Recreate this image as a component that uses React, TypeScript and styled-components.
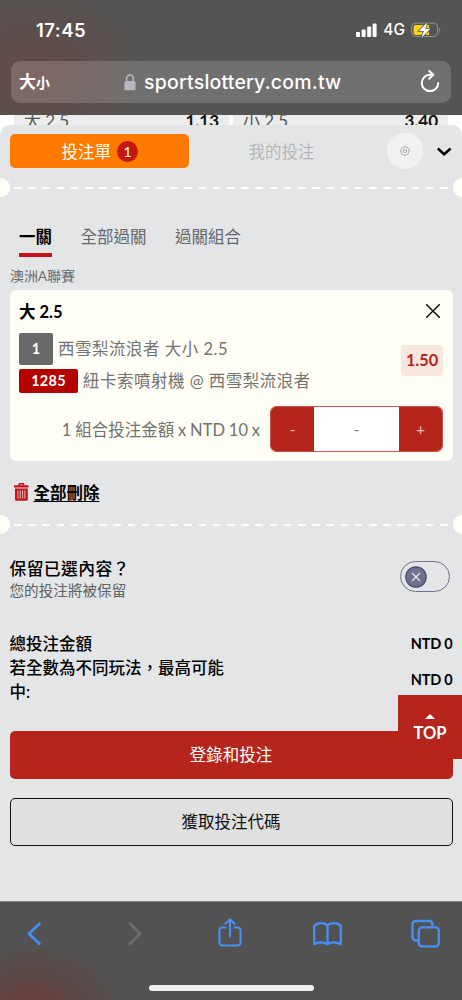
import React from 'react';
import styled, { createGlobalStyle } from 'styled-components';

const RED = '#b6251b';
const CREAM = '#fffef6';

const GlobalStyle = createGlobalStyle`
  * { box-sizing: border-box; }
  body { margin: 0; background: #fff; }
  button { font: inherit; border: 0; padding: 0; background: none; color: inherit; }
  svg { display: block; flex: none; }
`;

const Screen = styled.div`
  width: 462px;
  height: 1000px;
  overflow: hidden;
  position: relative;
  display: flex;
  flex-direction: column;
  color: #000;
  font-family: Lato, 'Noto Sans CJK TC', sans-serif;
  font-size: 16.5px;
  white-space: nowrap;
`;

/* Browser chrome */
const BrowserTop = styled.header`
  height: 115px;
  flex: none;
  padding: 16px 11px 0;
  color: #fff;
  font-family: Inter, 'Noto Sans CJK TC', sans-serif;
  background: radial-gradient(ellipse 110px 90px at 35px 75px, #684844 0%, rgba(98, 74, 71, 0.6) 45%, rgba(83, 83, 82, 0) 100%), #545453;
`;
const StatusBar = styled.div`
  height: 27px;
  display: flex;
  align-items: center;
  justify-content: space-between;
  padding: 0 10px 0 25px;
`;
const Clock = styled.span`
  font-size: 18.5px;
  font-weight: 600;
  letter-spacing: 0.5px;
`;
const StatusIcons = styled.div`
  display: flex;
  align-items: center;
  gap: 6px;
  font-size: 15.5px;
  font-weight: 500;
`;
const AddressBar = styled.div`
  height: 42px;
  margin-top: 18px;
  border-radius: 9px;
  background: rgba(255, 255, 255, 0.17);
  display: grid;
  grid-template-columns: 113px 1fr 31px;
  align-items: center;
`;
const TextSize = styled.div`
  padding-left: 8px;
  font-size: 17px;
  font-weight: 700;
  line-height: 24px;
  small { font-size: 14px; }
`;
const Host = styled.div`
  display: flex;
  align-items: center;
  gap: 8px;
  font-size: 19.5px;
  font-weight: 500;
  line-height: 24px;
  letter-spacing: 0.2px;
`;

/* Odds strip behind the slip */
const OddsStrip = styled.div`
  height: 24px;
  flex: none;
  padding: 0 14px;
  display: flex;
  gap: 4px;
  background: #fff;
`;
const OddsCell = styled.div`
  flex: 1;
  height: 24px;
  padding: 0 10px;
  background: #ececec;
  display: flex;
  justify-content: space-between;
  font-size: 17px;
  line-height: 12px;
  color: #555;
  b { color: #111; }
`;

/* Bet slip */
const Slip = styled.main`
  flex: 1;
  margin-top: -14px;
  border-radius: 10px 10px 0 0;
  background: #e4e5e7;
  padding-top: 8px;
`;
const SlipTabs = styled.div`
  height: 36px;
  padding: 0 10px 0 9.5px;
  display: grid;
  grid-template-columns: 179.5px 185px 13px 36px 1fr;
  align-items: center;
`;
const ActiveTab = styled.button`
  height: 34px;
  border-radius: 5px;
  background: #ff7b00;
  color: ${CREAM};
  display: flex;
  align-items: center;
  justify-content: center;
  gap: 6px;
  padding-left: 1px;
`;
const Count = styled.span`
  width: 21px;
  height: 21px;
  border-radius: 50%;
  background: #c4190f;
  font-size: 14px;
  line-height: 21px;
`;
const MutedTab = styled.button`
  color: #b5b6b8;
`;
const RoundButton = styled.button`
  grid-column: 4;
  width: 36px;
  height: 36px;
  border-radius: 50%;
  background: #f1f1f1;
  display: grid;
  place-items: center;
`;
const Collapse = styled.button`
  justify-self: end;
`;

const Perforation = styled.div<{ $top: number }>`
  height: 19px;
  margin-top: ${(p) => p.$top}px;
  display: flex;
  align-items: center;
  justify-content: space-between;
`;
const Notch = styled.i<{ $right?: boolean }>`
  width: 9.5px;
  height: 19px;
  background: ${CREAM};
  border-radius: ${(p) => (p.$right ? '10px 0 0 10px' : '0 10px 10px 0')};
`;
const Dashes = styled.i`
  width: 434px;
  height: 2px;
  margin-top: 1px;
  background: repeating-linear-gradient(90deg, ${CREAM} 0 7.6px, transparent 7.6px 14.2px);
`;

const ModeTabs = styled.nav`
  margin-top: 20px;
  padding-left: 19px;
  display: flex;
  gap: 28.5px;
`;
const ModeTab = styled.button<{ $active?: boolean }>`
  height: 40px;
  line-height: 38px;
  padding-top: 1px;
  display: flex;
  align-items: flex-start;
  color: ${(p) => (p.$active ? '#000' : '#66676a')};
  font-weight: ${(p) => (p.$active ? 700 : 400)};
  box-shadow: ${(p) => (p.$active ? 'inset 0 -4px #c4111a' : 'none')};
`;
const League = styled.div`
  height: 33px;
  padding-left: 10px;
  font-size: 12.6px;
  letter-spacing: -0.1px;
  line-height: 38px;
  font-size: 14px;
  color: #6b6c6e;
`;
const Card = styled.section`
  height: 171px;
  margin: 0 9.5px;
  padding: 10px 9.5px 9px;
  border-radius: 6px;
  background: ${CREAM};
  display: flex;
  flex-direction: column;
`;
const CardHead = styled.div`
  height: 22px;
  padding-right: 3px;
  display: flex;
  align-items: center;
  justify-content: space-between;
  font-size: 16.5px;
  font-weight: 700;
`;
const Selection = styled.div`
  display: flex;
  align-items: center;
  justify-content: space-between;
  height: 61px;
  margin-top: 10px;
`;
const Lines = styled.div`
  display: grid;
  gap: 4px;
`;
const Line = styled.div<{ $h: number }>`
  height: ${(p) => p.$h}px;
  padding-bottom: 2px;
  display: flex;
  align-items: center;
  gap: 5px;
  color: #727270;
  letter-spacing: 0.5px;
`;
const Tag = styled.span<{ $w: number; $color: string }>`
  width: ${(p) => p.$w}px;
  align-self: stretch;
  margin-bottom: -2px;
  border-radius: 2px;
  background: ${(p) => p.$color};
  color: #fff;
  font-size: 14.4px;
  letter-spacing: 0.3px;
  font-weight: 700;
  display: grid;
  place-items: center;
`;
const Odds = styled.span`
  width: 42px;
  height: 31px;
  margin-top: -5px;
  padding-bottom: 1px;
  border-radius: 4px;
  background: #f8e7df;
  color: ${RED};
  font-size: 16.3px;
  font-weight: 700;
  display: grid;
  place-items: center;
`;
const StakeRow = styled.div`
  margin-top: auto;
  display: flex;
  align-items: center;
  justify-content: flex-end;
  gap: 10px;
  color: #727270;
  word-spacing: -0.4px;
`;
const Stepper = styled.div`
  width: 173px;
  height: 46px;
  border: 1px solid #c6574e;
  border-radius: 6px;
  overflow: hidden;
  background: #fff;
  display: grid;
  grid-template-columns: 43px 1fr 43px;
  text-align: center;
  line-height: 44px;
  font-size: 15px;
`;
const StepButton = styled.button`
  background: ${RED};
  color: #eec0bb;
`;
const DeleteAll = styled.button`
  height: 30px;
  margin: 16px 0 0 14px;
  display: flex;
  align-items: center;
  gap: 4.5px;
  font-weight: 700;
  text-decoration: underline;
  text-underline-offset: 2px;
  text-decoration-thickness: 1px;
`;

const KeepRow = styled.div`
  margin-top: 23px;
  padding: 0 12px 0 9.5px;
  display: flex;
  align-items: center;
  justify-content: space-between;
`;
const KeepTitle = styled.div`
  font-size: 16.8px;
  font-weight: 500;
  letter-spacing: 0.4px;
  line-height: 24px;
`;
const KeepHint = styled.div`
  font-size: 14.6px;
  line-height: 20px;
  color: #606163;
`;
const Toggle = styled.button`
  width: 50px;
  height: 31px;
  margin-top: -5px;
  padding: 0 4px;
  border: 1.5px solid #74728f;
  border-radius: 16px;
  display: flex;
  align-items: center;
`;
const Totals = styled.div`
  height: 72px;
  margin-top: 31px;
  padding: 0 9.5px;
  display: flex;
  justify-content: space-between;
  font-weight: 500;
  line-height: 24px;
`;
const Amounts = styled.div`
  display: flex;
  flex-direction: column;
  gap: 12px;
  text-align: right;
  font-size: 14.5px;
  letter-spacing: -0.2px;
  font-weight: 700;
`;
const WideButton = styled.button<{ $primary?: boolean }>`
  display: block;
  width: 443px;
  height: 48px;
  padding-bottom: 2px;
  margin: ${(p) => (p.$primary ? 27 : 18.5)}px 9.5px 0;
  border-radius: 5px;
  border: ${(p) => (p.$primary ? '0' : '1.3px solid #111')};
  background: ${(p) => (p.$primary ? RED : '#e0e0e0')};
  color: ${(p) => (p.$primary ? '#fff' : '#111')};
`;
const BackToTop = styled.button`
  position: absolute;
  right: 0;
  top: 695px;
  width: 64px;
  height: 64px;
  padding-top: 3px;
  background: ${RED};
  color: #fff;
  font-size: 16.5px;
  font-weight: 700;
  line-height: 22px;
  display: flex;
  flex-direction: column;
  align-items: center;
  justify-content: center;
  gap: 3px;
`;

const BrowserBottom = styled.footer`
  height: 99px;
  flex: none;
  border-top: 1px solid #858585;
  background: radial-gradient(ellipse 95px 65px at 30px 105px, #6b3c3a 0%, rgba(96, 65, 63, 0.6) 50%, rgba(83, 83, 83, 0) 100%), #525252;
  color: #468ff8;
  display: flex;
  flex-direction: column;
  justify-content: space-between;
  padding: 13px 0 9px 24px;
`;
const Toolbar = styled.div`
  display: grid;
  grid-template-columns: 99.5px 94.5px 95px 98px auto;
  svg { overflow: visible; }
`;
const HomeIndicator = styled.div`
  width: 165px;
  height: 6px;
  margin-left: 125px;
  border-radius: 3px;
  background: #f0f0f0;
`;

const line = (w: number) => ({
  fill: 'none',
  stroke: 'currentColor',
  strokeWidth: w,
  strokeLinecap: 'round' as const,
  strokeLinejoin: 'round' as const,
});

const SignalIcon = () => (
  <svg width="21" height="14" fill="#fff">
    <rect x="0" y="9" width="4" height="5" rx="1" />
    <rect x="5.6" y="6.5" width="4" height="7.5" rx="1" />
    <rect x="11.2" y="3.5" width="4" height="10.5" rx="1" />
    <rect x="16.6" y="0.5" width="4" height="13.5" rx="1" />
  </svg>
);
const BatteryIcon = () => (
  <svg width="30" height="16" viewBox="0 0 30 16">
    <rect x="0.6" y="1.1" width="26" height="13.4" rx="4" fill="none" stroke="#929291" />
    <path d="M4.6 3H18v10H4.6a2 2 0 0 1-2-2V5a2 2 0 0 1 2-2z" fill="#fcd315" />
    <path d="M28.2 5.7c1.6.8 1.6 3.4 0 4.2z" fill="#929291" />
    <path d="M16.4.2 8 9h4.800l-2.300 6.800L19.400 6.700h-5z" fill="#fff" stroke="#545453" strokeWidth="1.6" paintOrder="stroke" />
  </svg>
);
const LockIcon = () => (
  <svg width="12" height="17" viewBox="0 0 12 17">
    <path d="M2.7 8V4.4a3.3 3.5 0 0 1 6.6 0V8" fill="none" stroke="#b9b7bf" strokeWidth="1.5" />
    <rect x="0.4" y="7" width="11.2" height="9.3" rx="1.6" fill="#b9b7bf" />
  </svg>
);
const ReloadIcon = () => (
  <svg width="20" height="24" viewBox="0 0 20 24" {...line(2)}>
    <path d="M12 4.700H10A8.200 8.200 0 1 0 18.200 12.900" />
    <path d="m9.200 1 4.100 3.800-4.100 4" />
  </svg>
);
const GearIcon = () => (
  <svg width="10" height="10" viewBox="0 0 10 10" fill="none" stroke="#a2a2a2" strokeWidth="0.9">
    <path d="M4.1.7h1.8l.4 1 1-.4 1.3 1.3-.4 1 1 .5v1.8l-1 .4.4 1.1-1.3 1.3-1-.4-.4 1H4.1l-.5-1-1 .4-1.3-1.3.4-1.1-1-.4V4.1l1-.5-.4-1 1.3-1.3 1 .4z" />
    <circle cx="5" cy="5" r="1.6" />
  </svg>
);
const CollapseIcon = () => (
  <svg width="15" height="9" viewBox="0 0 15 9" {...line(2.5)} strokeLinecap="butt" strokeLinejoin="miter">
    <path d="m.8 1.500 6.400 5.800 6.400-5.800" />
  </svg>
);
const CloseIcon = () => (
  <svg width="14" height="14" viewBox="0 0 14 14" {...line(1.4)}>
    <path d="m.7.7 12.6 12.6M13.3.7.7 13.3" />
  </svg>
);
const TrashIcon = () => (
  <svg width="15" height="18" viewBox="0 0 15 18" fill="#c4111a">
    <path d="M4.5 2.2V.8Q4.5 0 5.3 0h4.2q.8 0 .8.8v1.4h4.2v2.3H0V2.2zM6 2.2h2.8V1.4H6z" fillRule="evenodd" />
    <path d="M1 5.4h12.8v11q0 1.4-1.4 1.4h-10Q1 17.8 1 16.4z" />
    <path d="M4 7.300v8.400M6.300 7.300v8.400M8.600 7.300v8.400M10.900 7.300v8.400" stroke="#eccdce" strokeWidth="0.9" />
  </svg>
);
const KnobIcon = () => (
  <svg width="22" height="22" viewBox="0 0 22 22">
    <circle cx="11" cy="11" r="10.2" fill="#706f8c" stroke="#4e4c75" strokeWidth="1.2" />
    <path d="m7 7 8 8m0-8-8 8" stroke="#eeeef2" strokeWidth="1.2" />
  </svg>
);
const UpIcon = () => (
  <svg width="10" height="5" fill="#fff">
    <path d="m5 0 5 5H0z" />
  </svg>
);
const BackIcon = () => (
  <svg width="20" height="36" viewBox="0 0 20 36" {...line(2.7)}>
    <path d="M15.4 8.800 5 18.800l10.400 10" />
  </svg>
);
const ForwardIcon = () => (
  <svg width="20" height="36" viewBox="0 0 20 36" {...line(2.7)} stroke="#6d6d6d">
    <path d="m6 8.800 10.200 10L6 28.800" />
  </svg>
);
const ShareIcon = () => (
  <svg width="24" height="36" viewBox="0 0 24 36" {...line(2.1)}>
    <path d="M7.500 12.500H4.500Q1.500 12.500 1.500 15.500v12q0 3 3 3h15q3 0 3-3v-12q0-3-3-3h-3" />
    <path d="M12 21.500V4.500M7.500 8.700 12 4.300l4.500 4.400" />
  </svg>
);
const BookIcon = () => (
  <svg width="29" height="36" viewBox="0 0 29 36" {...line(2.3)}>
    <path d="M14.500 11Q12.500 8.200 8.300 8.200 3.600 8.200 1.200 11v18.200Q4 27.400 8.300 27.400q3.700 0 6.200 1.800 2.500-1.800 6.200-1.800 4.300 0 7.100 1.800V11q-2.400-2.800-7.100-2.800T14.500 11zv18" />
  </svg>
);
const TabsIcon = () => (
  <svg width="29" height="36" viewBox="0 0 29 36" {...line(2.3)}>
    <path d="M7.500 25.500H5q-3.500 0-3.500-3.500V9.500Q1.500 6 5 6h13q3.500 0 3.500 3.500V12" />
    <rect x="7.800" y="12.300" width="20" height="19" rx="3.200" />
  </svg>
);

const Divider = ({ top }: { top: number }) => (
  <Perforation $top={top}>
    <Notch />
    <Dashes />
    <Notch $right />
  </Perforation>
);

export default function App() {
  return (
    <Screen>
      <GlobalStyle />
      <BrowserTop>
        <StatusBar>
          <Clock>17:45</Clock>
          <StatusIcons>
            <SignalIcon />
            4G
            <BatteryIcon />
          </StatusIcons>
        </StatusBar>
        <AddressBar>
          <TextSize>大<small>小</small></TextSize>
          <Host><LockIcon />sportslottery.com.tw</Host>
          <ReloadIcon />
        </AddressBar>
      </BrowserTop>

      <OddsStrip>
        <OddsCell><span>大 2.5</span><b>1.13</b></OddsCell>
        <OddsCell><span>小 2.5</span><b>3.40</b></OddsCell>
      </OddsStrip>

      <Slip>
        <SlipTabs>
          <ActiveTab>投注單<Count>1</Count></ActiveTab>
          <MutedTab>我的投注</MutedTab>
          <RoundButton><GearIcon /></RoundButton>
          <Collapse><CollapseIcon /></Collapse>
        </SlipTabs>
        <Divider top={9} />
        <ModeTabs>
          <ModeTab $active>一關</ModeTab>
          <ModeTab>全部過關</ModeTab>
          <ModeTab>過關組合</ModeTab>
        </ModeTabs>
        <League>澳洲A聯賽</League>
        <Card>
          <CardHead>大 2.5<CloseIcon /></CardHead>
          <Selection>
            <Lines>
              <Line $h={32}><Tag $w={34} $color="#696969">1</Tag>西雪梨流浪者 大小 2.5</Line>
              <Line $h={24}><Tag $w={59} $color="#b50000">1285</Tag>紐卡索噴射機 @ 西雪梨流浪者</Line>
            </Lines>
            <Odds>1.50</Odds>
          </Selection>
          <StakeRow>
            1 組合投注金額 x NTD 10 x
            <Stepper>
              <StepButton>-</StepButton>
              <span>-</span>
              <StepButton>+</StepButton>
            </Stepper>
          </StakeRow>
        </Card>
        <DeleteAll><TrashIcon />全部刪除</DeleteAll>
        <Divider top={8} />
        <KeepRow>
          <div>
            <KeepTitle>保留已選內容？</KeepTitle>
            <KeepHint>您的投注將被保留</KeepHint>
          </div>
          <Toggle><KnobIcon /></Toggle>
        </KeepRow>
        <Totals>
          <div>總投注金額<br />若全數為不同玩法，最高可能<br />中:</div>
          <Amounts><span>NTD 0</span><span>NTD 0</span></Amounts>
        </Totals>
        <WideButton $primary>登錄和投注</WideButton>
        <WideButton>獲取投注代碼</WideButton>
      </Slip>
      <BackToTop><UpIcon />TOP</BackToTop>

      <BrowserBottom>
        <Toolbar>
          <BackIcon />
          <ForwardIcon />
          <ShareIcon />
          <BookIcon />
          <TabsIcon />
        </Toolbar>
        <HomeIndicator />
      </BrowserBottom>
    </Screen>
  );
}
